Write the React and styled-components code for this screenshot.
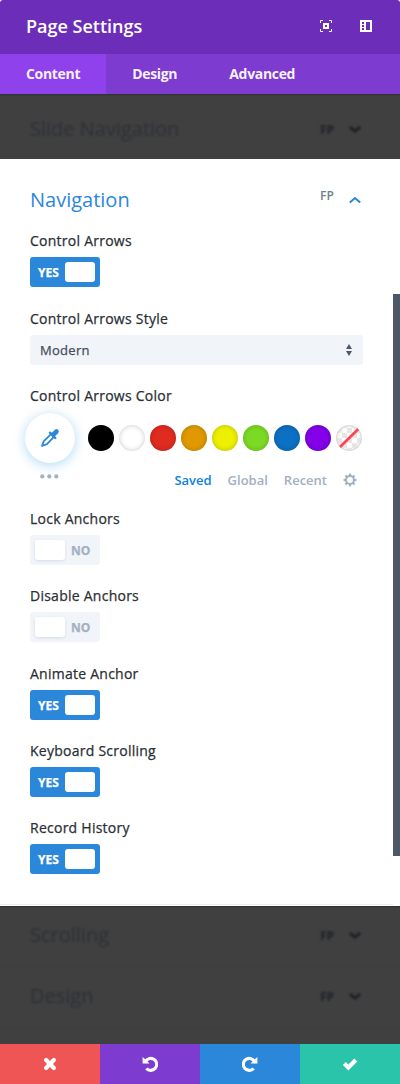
import React from "react";
import styled, { createGlobalStyle } from "styled-components";

const GlobalStyle = createGlobalStyle`
  *, *::before, *::after { box-sizing: border-box; }
  body { margin: 0; background: #fff; font-family: "Open Sans", "Noto Sans", sans-serif; }
`;

const Modal = styled.main`
  display: flex;
  flex-direction: column;
  width: 400px;
  height: 1084px;
  overflow: hidden;
  background: #fff;
`;

const Header = styled.header`
  display: flex;
  align-items: center;
  justify-content: space-between;
  flex: none;
  height: 54px;
  padding: 0 28px 2px 26px;
  background: #6c2eb9;
  border-radius: 3px 3px 0 0;
`;

const Title = styled.h1`
  margin: 0;
  font-size: 18px;
  line-height: 24px;
  font-weight: 600;
  color: #fff;
`;

const HeaderActions = styled.div`
  display: flex;
  gap: 28px;
  svg { display: block; }
`;

const TabBar = styled.nav`
  display: flex;
  flex: none;
  height: 40px;
  background: #7e3bd0;
`;

const Tab = styled.a`
  padding: 0 26px;
  font-size: 14px;
  line-height: 40px;
  font-weight: 700;
  letter-spacing: -0.32px;
  color: rgba(255, 255, 255, 0.95);
  background: ${(p) => (p.$active ? "#8f42ec" : "transparent")};
`;

const DimSection = styled.section`
  flex: none;
  height: ${(p) => p.$height}px;
  padding-top: ${(p) => p.$top || 0}px;
  background: #404040;
  box-shadow: inset 0 2px 2px -1px rgba(0, 0, 0, 0.25);
  overflow: hidden;
`;

const DimRow = styled.div`
  display: flex;
  align-items: center;
  height: 61px;
  padding: 0 39px 2px 30px;
  border-bottom: 1px solid #3d3d3d;
  color: #2c3036;
  filter: blur(0.8px);
`;

const GroupTitle = styled.h2`
  flex: 1;
  margin: 0;
  font-size: 20px;
  line-height: 26px;
  font-weight: 400;
`;

const Badge = styled.span`
  width: 29px;
  font-size: 12px;
  line-height: 16px;
  font-weight: 600;
  color: #6e7f91;
`;

const DimBadge = styled(Badge)`
  padding-top: 2px;
  font-weight: 800;
  color: #24272b;
`;

const Panel = styled.section`
  display: flex;
  flex-direction: column;
  flex: none;
  position: relative;
  height: 747px;
  padding: 28px 37px 0 30px;
  background: #fff;
`;

const PanelHead = styled.div`
  display: flex;
  height: 44.25px;
  padding-right: 2px;
  color: #2b87da;
  ${Badge} { margin-top: 1px; }
  svg { margin-top: 9px; }
`;

const Field = styled.div`
  flex: none;
  height: ${(p) => p.$height || 77.25}px;
`;

const Label = styled.div`
  height: 26px;
  font-size: 14px;
  line-height: 20px;
  font-weight: 500;
  letter-spacing: 0.25px;
  color: #2a2f34;
  -webkit-text-stroke: 0.25px #2a2f34;
`;

const Switch = styled.div`
  display: flex;
  align-items: center;
  flex-direction: ${(p) => (p.$on ? "row" : "row-reverse")};
  width: 70px;
  height: 30px;
  padding: 5px;
  border-radius: 3px;
  background: ${(p) => (p.$on ? "#2b87da" : "#f1f4f9")};
  color: ${(p) => (p.$on ? "#fff" : "#a2b0c1")};
`;

const SwitchText = styled.span`
  flex: 1;
  font-size: 12px;
  line-height: 20px;
  font-weight: 700;
  -webkit-text-stroke: 0.25px currentColor;
  padding: ${(p) => (p.$on ? "2px 0 0 3px" : "2px 0 0 6px")};
`;

const Knob = styled.span`
  width: 30px;
  height: 20px;
  border-radius: 3px;
  background: #fff;
  box-shadow: ${(p) => (p.$on ? "none" : "0 1px 3px rgba(43, 60, 90, 0.12)")};
`;

const Select = styled.div`
  display: flex;
  align-items: center;
  justify-content: space-between;
  height: 30px;
  padding: 0 10px;
  border-radius: 3px;
  background: #f1f4f9;
  font-size: 13px;
  font-weight: 500;
  letter-spacing: 0.3px;
  color: #434e5b;
  -webkit-text-stroke: 0.25px #434e5b;
`;

const Palette = styled.div`
  display: flex;
  align-items: center;
  justify-content: space-between;
  height: 50px;
  margin: 1px 1px 0 -5px;
`;

const Picker = styled.div`
  display: grid;
  place-items: center;
  width: 50px;
  height: 50px;
  margin-right: 8px;
  border-radius: 50%;
  background: #fff;
  box-shadow: 0 2px 12px rgba(43, 155, 230, 0.38);
`;

const Swatch = styled.span`
  width: 26px;
  height: 26px;
  border-radius: 50%;
  overflow: hidden;
  background: ${(p) => p.$color};
  box-shadow: inset 0 0 5px rgba(0, 0, 0, 0.22);
  svg { display: block; }
`;

const PaletteFooter = styled.div`
  display: flex;
  align-items: center;
  height: 20px;
  margin-top: 7px;
  padding: 0 6px 0 10px;
`;

const PaletteTab = styled.span`
  font-size: 13px;
  line-height: 20px;
  font-weight: 600;
  margin-right: 16px;
  color: ${(p) => (p.$active ? "#0c82e0" : "#a2b0c1")};
`;

const Spacer = styled.span`
  flex: 1;
`;

const ScrollThumb = styled.div`
  position: absolute;
  top: 135px;
  right: 0;
  width: 7px;
  height: 562px;
  background: #4c5866;
`;

const PanelEdge = styled.div`
  position: absolute;
  left: 0;
  bottom: 1px;
  width: 393px;
  height: 1px;
  background: #eeeff1;
`;

const Footer = styled.footer`
  display: flex;
  flex: none;
  height: 40px;
`;

const FooterButton = styled.button`
  display: grid;
  place-items: center;
  flex: 1;
  height: 40px;
  padding: 0;
  border: 0;
  background: ${(p) => p.$color};
`;

const FocusIcon = () => (
  <svg width="12" height="12" viewBox="0 0 12 12" fill="none" stroke="#fff">
    <path d="M.5 3V.5H3M9 .5h2.5V3M11.5 9v2.5H9M3 11.5H.5V9" />
    <rect x="4" y="4" width="4" height="4" strokeWidth="2" />
  </svg>
);

const DockIcon = () => (
  <svg width="12" height="12" viewBox="0 0 12 12">
    <path fill="#fff" fillRule="evenodd" d="M0 0h12v12H0zM2 2v2h2V2zM2 5v2h2V5zM2 8v2h2V8zM6 2v8h4V2z" />
  </svg>
);

const Chevron = ({ up }) => (
  <svg width="12" height="8" viewBox="0 0 12 8" fill="none" stroke={up ? "currentColor" : "#1d2126"} strokeWidth={up ? 2 : 3}>
    <path d={up ? "M.8 6.6 6 2l5.2 4.6" : "M.8 2 6 6.2 11.2 2"} />
  </svg>
);

const SortArrows = () => (
  <svg width="8" height="12" viewBox="0 0 8 12" fill="#4c5866">
    <path d="M4 0l3 5H1zM4 12 1 7h6z" />
  </svg>
);

const Eyedropper = () => (
  <svg width="20" height="20" viewBox="0 0 20 20" fill="none" stroke="#2b87da">
    <path d="M11.3 5.8 3.8 13.1 2 18l4.9-1.8 7.3-7.5" strokeWidth="1.8" strokeLinejoin="round" />
    <path d="m10 4.7 5.3 5.3" strokeWidth="2.4" strokeLinecap="round" />
    <path d="m13.3 6.7 3.2-3.2" strokeWidth="4.6" strokeLinecap="round" />
  </svg>
);

const DotsIcon = styled.svg`
  align-self: flex-start;
  margin-top: 4px;
`;

const Dots = () => (
  <DotsIcon width="20" height="5" viewBox="0 0 20 5" fill="#a2b0c1">
    <circle cx="2.3" cy="2.4" r="2.1" /><circle cx="9.3" cy="2.4" r="2.1" /><circle cx="16.3" cy="2.4" r="2.1" />
  </DotsIcon>
);

const Gear = () => (
  <svg width="14" height="14" viewBox="0 0 14 14" fill="none" stroke="#a2b0c1">
    <circle cx="7" cy="7" r="3.9" strokeWidth="2" />
    {[0, 45, 90, 135, 180, 225, 270, 315].map((a) => (
      <path key={a} d="M7 3V.6" strokeWidth="2.2" transform={`rotate(${a} 7 7)`} />
    ))}
  </svg>
);

const NoColor = () => (
  <svg width="26" height="26" viewBox="0 0 26 26">
    <defs>
      <pattern id="checks" width="10" height="10" x="1" y="3" patternUnits="userSpaceOnUse">
        <path fill="#e6e6e6" d="M0 0h5v5H0zM5 5h5v5H5z" />
      </pattern>
    </defs>
    <circle cx="13" cy="13" r="13" fill="url(#checks)" />
    <circle cx="13" cy="13" r="12.5" fill="none" stroke="#000" strokeOpacity=".06" />
    <path d="M4 22 22.3 4" stroke="#ff4554" strokeWidth="2.8" />
  </svg>
);

const CloseIcon = () => (
  <svg width="14" height="14" viewBox="0 0 14 14" stroke="#fff" strokeWidth="4.2" strokeLinecap="round">
    <path d="m3.1 3.1 7.8 7.8M10.9 3.1l-7.8 7.8" />
  </svg>
);

const TurnIcon = ({ redo }) => (
  <svg width="16" height="16" viewBox="0 0 16 16" transform={redo ? "scale(-1 1)" : undefined}>
    <path d="M3.6 5.2A6 6 0 1 1 4.3 12.5" fill="none" stroke="#fff" strokeWidth="3.1" />
    <path d="M.6.9v6.6h6.8L5.4 5.2 2.6 2.8z" fill="#fff" />
  </svg>
);

const CheckIcon = () => (
  <svg width="16" height="14" viewBox="0 0 16 14" fill="none" stroke="#fff" strokeWidth="4.2">
    <path d="m2.3 6.5 4.1 4 7.4-7.4" />
  </svg>
);

const Toggle = ({ label, on }) => (
  <Field>
    <Label>{label}</Label>
    <Switch $on={on}>
      <SwitchText $on={on}>{on ? "YES" : "NO"}</SwitchText>
      <Knob $on={on} />
    </Switch>
  </Field>
);

const Collapsed = ({ title }) => (
  <DimRow>
    <GroupTitle>{title}</GroupTitle>
    <DimBadge>FP</DimBadge>
    <Chevron />
  </DimRow>
);

const colors = ["#000", "#fff", "#e02b20", "#e09900", "#edf000", "#7cda24", "#0c71c3", "#8300e9"];

export default function App() {
  return (
    <Modal>
      <GlobalStyle />
      <Header>
        <Title>Page Settings</Title>
        <HeaderActions>
          <FocusIcon />
          <DockIcon />
        </HeaderActions>
      </Header>
      <TabBar>
        <Tab $active>Content</Tab>
        <Tab>Design</Tab>
        <Tab>Advanced</Tab>
      </TabBar>
      <DimSection $height={65} $top={6}>
        <Collapsed title="Slide Navigation" />
      </DimSection>
      <Panel>
        <PanelHead>
          <GroupTitle>Navigation</GroupTitle>
          <Badge>FP</Badge>
          <Chevron up />
        </PanelHead>
        <Toggle label="Control Arrows" on />
        <Field>
          <Label>Control Arrows Style</Label>
          <Select>
            Modern
            <SortArrows />
          </Select>
        </Field>
        <Field $height={123.25}>
          <Label>Control Arrows Color</Label>
          <Palette>
            <Picker><Eyedropper /></Picker>
            {colors.map((c) => <Swatch key={c} $color={c} />)}
            <Swatch $color="#fff"><NoColor /></Swatch>
          </Palette>
          <PaletteFooter>
            <Dots />
            <Spacer />
            <PaletteTab $active>Saved</PaletteTab>
            <PaletteTab>Global</PaletteTab>
            <PaletteTab>Recent</PaletteTab>
            <Gear />
          </PaletteFooter>
        </Field>
        <Toggle label="Lock Anchors" />
        <Toggle label="Disable Anchors" />
        <Toggle label="Animate Anchor" on />
        <Toggle label="Keyboard Scrolling" on />
        <Toggle label="Record History" on />
        <ScrollThumb />
        <PanelEdge />
      </Panel>
      <DimSection $height={138}>
        <Collapsed title="Scrolling" />
        <Collapsed title="Design" />
      </DimSection>
      <Footer>
        <FooterButton $color="#ef5555"><CloseIcon /></FooterButton>
        <FooterButton $color="#7e3bd0"><TurnIcon /></FooterButton>
        <FooterButton $color="#2b87da"><TurnIcon redo /></FooterButton>
        <FooterButton $color="#29c4a9"><CheckIcon /></FooterButton>
      </Footer>
    </Modal>
  );
}
